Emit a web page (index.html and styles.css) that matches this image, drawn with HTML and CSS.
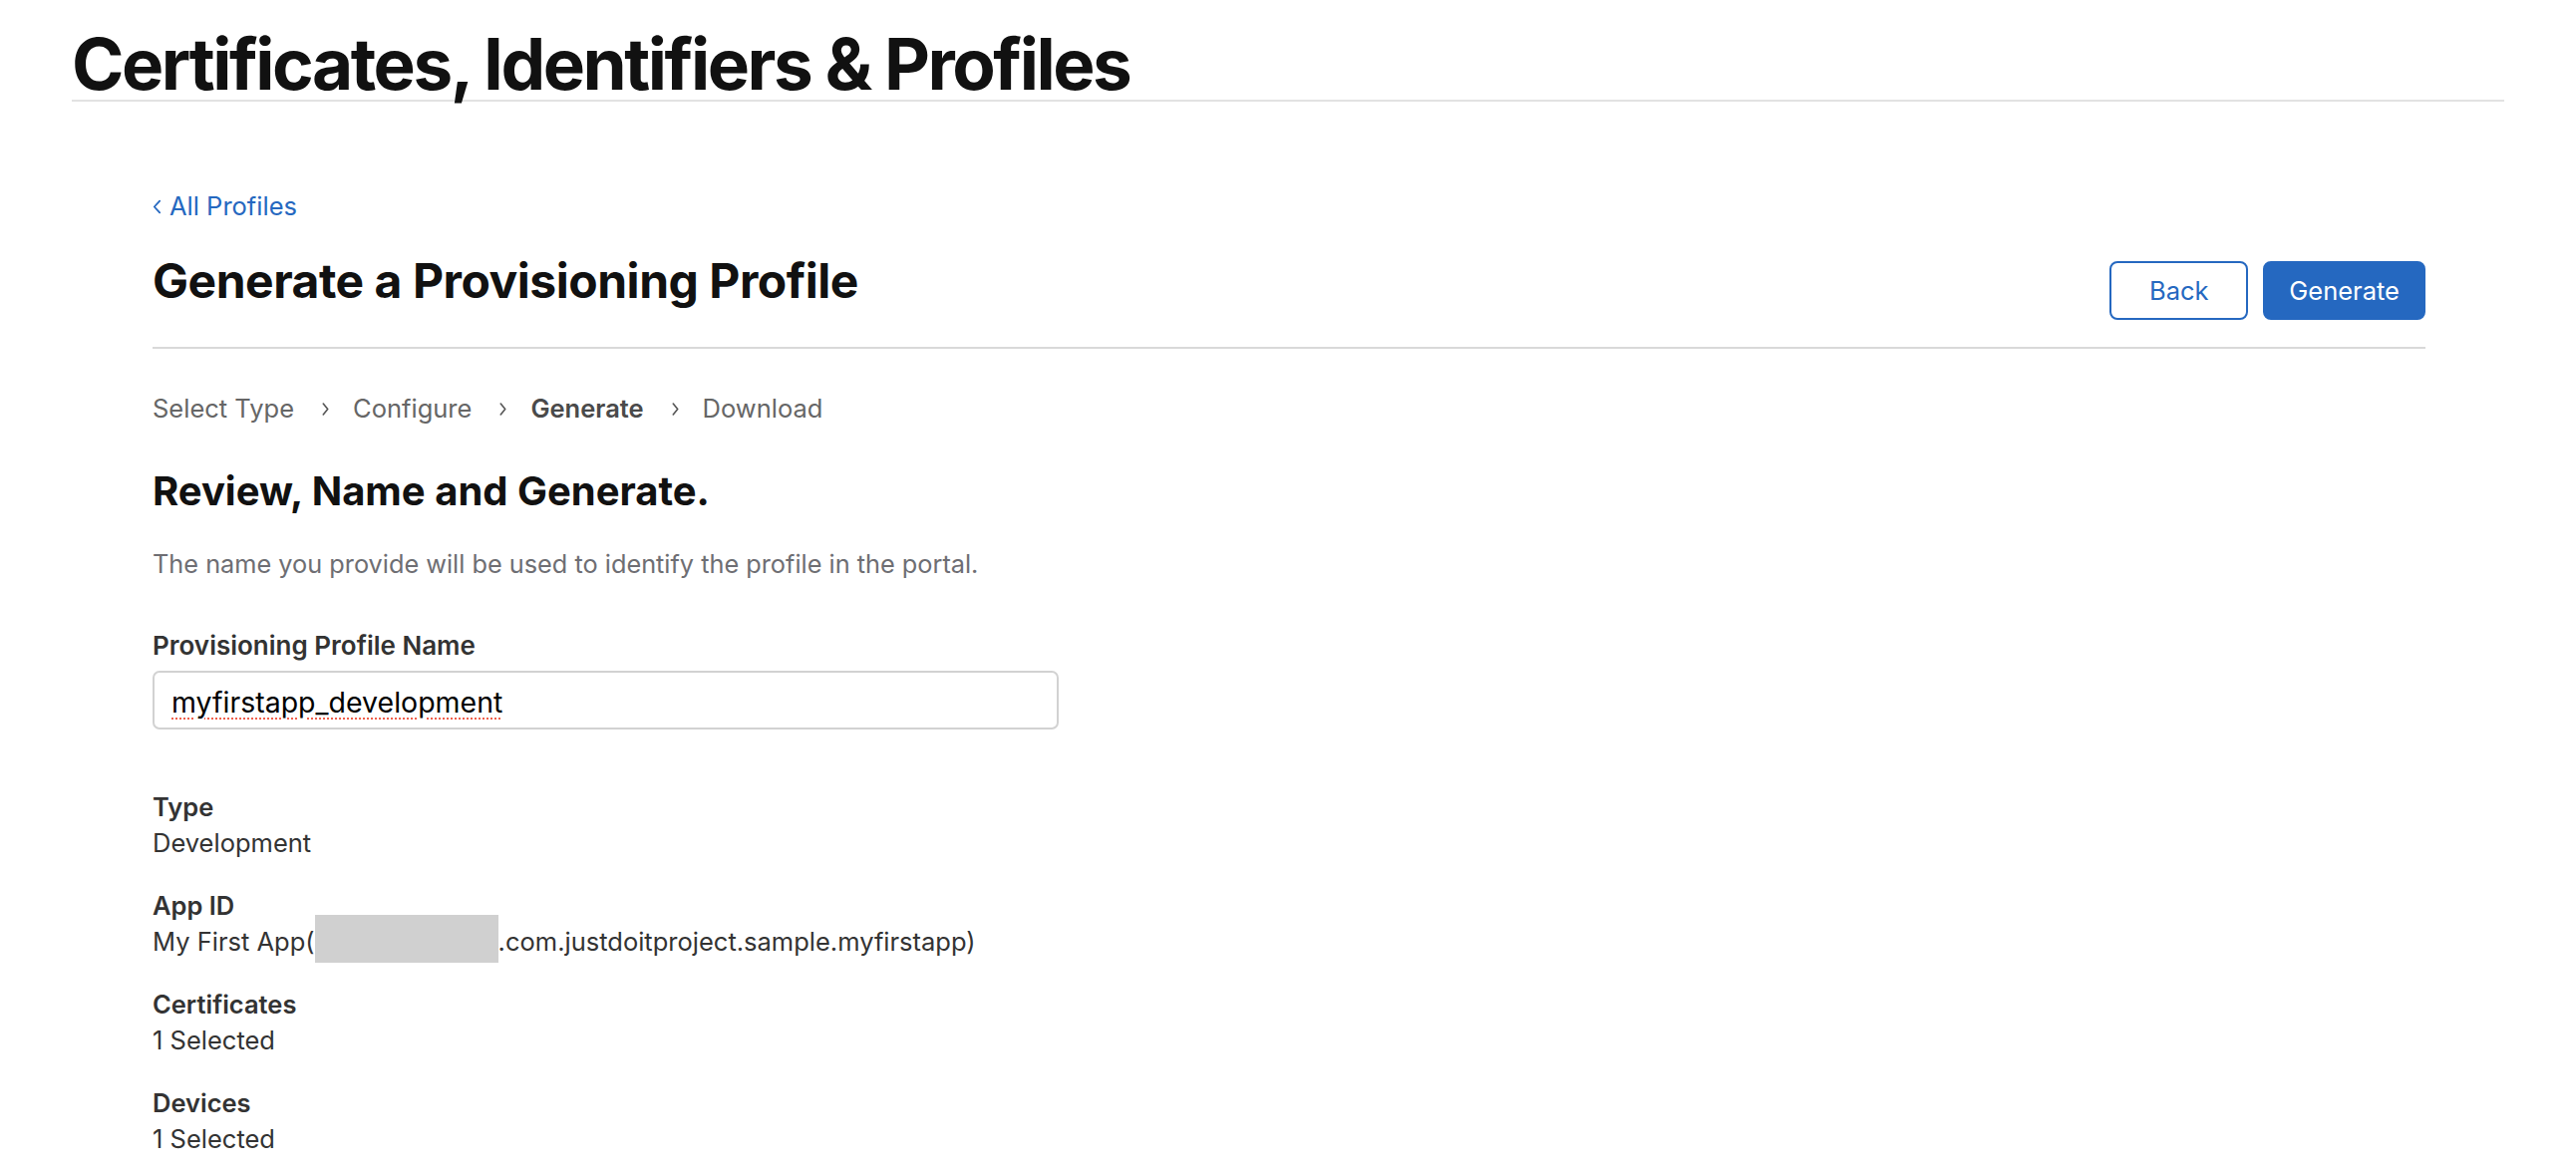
FILE: index.html
```html
<!DOCTYPE html>
<html lang="en">
<head>
<meta charset="utf-8">
<title>Certificates, Identifiers &amp; Profiles</title>
<link rel="stylesheet" href="styles.css">
</head>
<body>
<header class="site-header">
  <h1 class="site-title">Certificates, Identifiers &amp; Profiles</h1>
</header>
<main class="content">
  <a class="back-link" href="#">
    <svg class="back-chevron" viewBox="0 0 10 16" width="9" height="15" aria-hidden="true"><path d="M8 1.5 L2 8 L8 14.5" fill="none" stroke="currentColor" stroke-width="2" stroke-linecap="round" stroke-linejoin="round"/></svg>
    <span>All Profiles</span>
  </a>
  <div class="page-head">
    <h2 class="page-title">Generate a Provisioning Profile</h2>
    <div class="actions">
      <button class="btn btn-outline" type="button">Back</button>
      <button class="btn btn-primary" type="button">Generate</button>
    </div>
  </div>
  <nav class="steps">
    <span class="step">Select Type</span>
    <svg class="step-sep" viewBox="0 0 10 16" width="9" height="15" aria-hidden="true"><path d="M2.5 2 L7.5 8 L2.5 14" fill="none" stroke="currentColor" stroke-width="1.8" stroke-linecap="round" stroke-linejoin="round"/></svg>
    <span class="step">Configure</span>
    <svg class="step-sep" viewBox="0 0 10 16" width="9" height="15" aria-hidden="true"><path d="M2.5 2 L7.5 8 L2.5 14" fill="none" stroke="currentColor" stroke-width="1.8" stroke-linecap="round" stroke-linejoin="round"/></svg>
    <span class="step step-current">Generate</span>
    <svg class="step-sep" viewBox="0 0 10 16" width="9" height="15" aria-hidden="true"><path d="M2.5 2 L7.5 8 L2.5 14" fill="none" stroke="currentColor" stroke-width="1.8" stroke-linecap="round" stroke-linejoin="round"/></svg>
    <span class="step">Download</span>
  </nav>
  <h3 class="section-title">Review, Name and Generate.</h3>
  <p class="section-desc">The name you provide will be used to identify the profile in the portal.</p>
  <div class="field">
    <div class="field-label">Provisioning Profile Name</div>
    <div class="field-input"><span class="field-value">myfirstapp_development</span></div>
  </div>
  <dl class="details">
    <div class="detail">
      <dt>Type</dt>
      <dd>Development</dd>
    </div>
    <div class="detail">
      <dt>App ID</dt>
      <dd>My First App(<span class="redacted"></span>.com.justdoitproject.sample.myfirstapp)</dd>
    </div>
    <div class="detail">
      <dt>Certificates</dt>
      <dd>1 Selected</dd>
    </div>
    <div class="detail">
      <dt>Devices</dt>
      <dd>1 Selected</dd>
    </div>
  </dl>
</main>
</body>
</html>
```
FILE: styles.css
```css
html, body {
  margin: 0;
  padding: 0;
  background: #ffffff;
}
body {
  font-family: Inter, "Noto Sans", "Liberation Sans", sans-serif;
  color: #1d1d1f;
  font-size: 25.5px;
  overflow: hidden;
}
.site-header {
  width: 2440px;
  margin: 0 auto;
  padding-top: 28px;
  border-bottom: 2px solid #e2e2e2;
}
.site-title {
  margin: 0;
  font-size: 71px;
  line-height: 72px;
  font-weight: 700;
  letter-spacing: -0.035em;
  color: #111111;
}
.content {
  width: 2282px;
  margin: 0 auto;
  padding-left: 2px;
  box-sizing: border-box;
}
.back-link {
  display: inline-flex;
  align-items: center;
  gap: 8px;
  margin-top: 90px;
  line-height: 30px;
  color: #2568c0;
  text-decoration: none;
}
.back-chevron {
  margin-top: 1px;
}
.page-head {
  display: flex;
  justify-content: space-between;
  align-items: flex-start;
  margin-top: 31px;
  padding-bottom: 27px;
  border-bottom: 2px solid #d9d9d9;
}
.page-title {
  margin: 0;
  font-size: 48px;
  line-height: 58px;
  font-weight: 700;
  letter-spacing: -0.01em;
  color: #111111;
}
.actions {
  display: flex;
  gap: 15px;
  margin-top: 9px;
}
.btn {
  height: 59px;
  box-sizing: border-box;
  border-radius: 8px;
  font-family: inherit;
  font-size: 25.5px;
  padding: 0 24px;
  min-width: 139px;
  cursor: pointer;
}
.btn-outline {
  background: #ffffff;
  color: #2568c0;
  border: 2px solid #2568c0;
}
.btn-primary {
  background: #2568c0;
  color: #ffffff;
  border: 2px solid #2568c0;
}
.steps {
  display: flex;
  align-items: center;
  gap: 23px;
  margin-top: 45px;
  line-height: 30px;
  color: #666666;
}
.step-sep {
  color: #555555;
  margin-left: 4px;
}
.step-current {
  font-weight: 600;
  color: #4a4a4a;
}
.section-title {
  margin: 45px 0 0;
  font-size: 40px;
  line-height: 46px;
  font-weight: 700;
  letter-spacing: 0;
  color: #111111;
}
.section-desc {
  margin: 35px 0 0;
  font-size: 25.3px;
  line-height: 30px;
  color: #6e6e73;
}
.field {
  margin-top: 52px;
}
.field-label {
  font-weight: 600;
  font-size: 26px;
  line-height: 30px;
  color: #333333;
}
.field-input {
  margin-top: 10px;
  width: 909px;
  height: 59px;
  box-sizing: border-box;
  border: 2px solid #d2d2d2;
  border-radius: 7px;
  padding: 3px 17px 0;
  display: flex;
  align-items: center;
  font-size: 28.5px;
  font-weight: 400;
  color: #000000;
}
.field-value {
  text-decoration: underline dotted #f0604c;
  text-decoration-thickness: 2px;
  text-underline-offset: 6px;
}
.details {
  margin: 60px 0 0;
}
.detail {
  margin-bottom: 27px;
}
.detail dt {
  font-weight: 600;
  line-height: 36px;
  color: #333333;
}
.detail dd {
  margin: 0;
  line-height: 36px;
  color: #333333;
}
.redacted {
  display: inline-block;
  width: 184px;
  height: 48px;
  margin: -12px 0;
  background: #d0d0d0;
}
```
